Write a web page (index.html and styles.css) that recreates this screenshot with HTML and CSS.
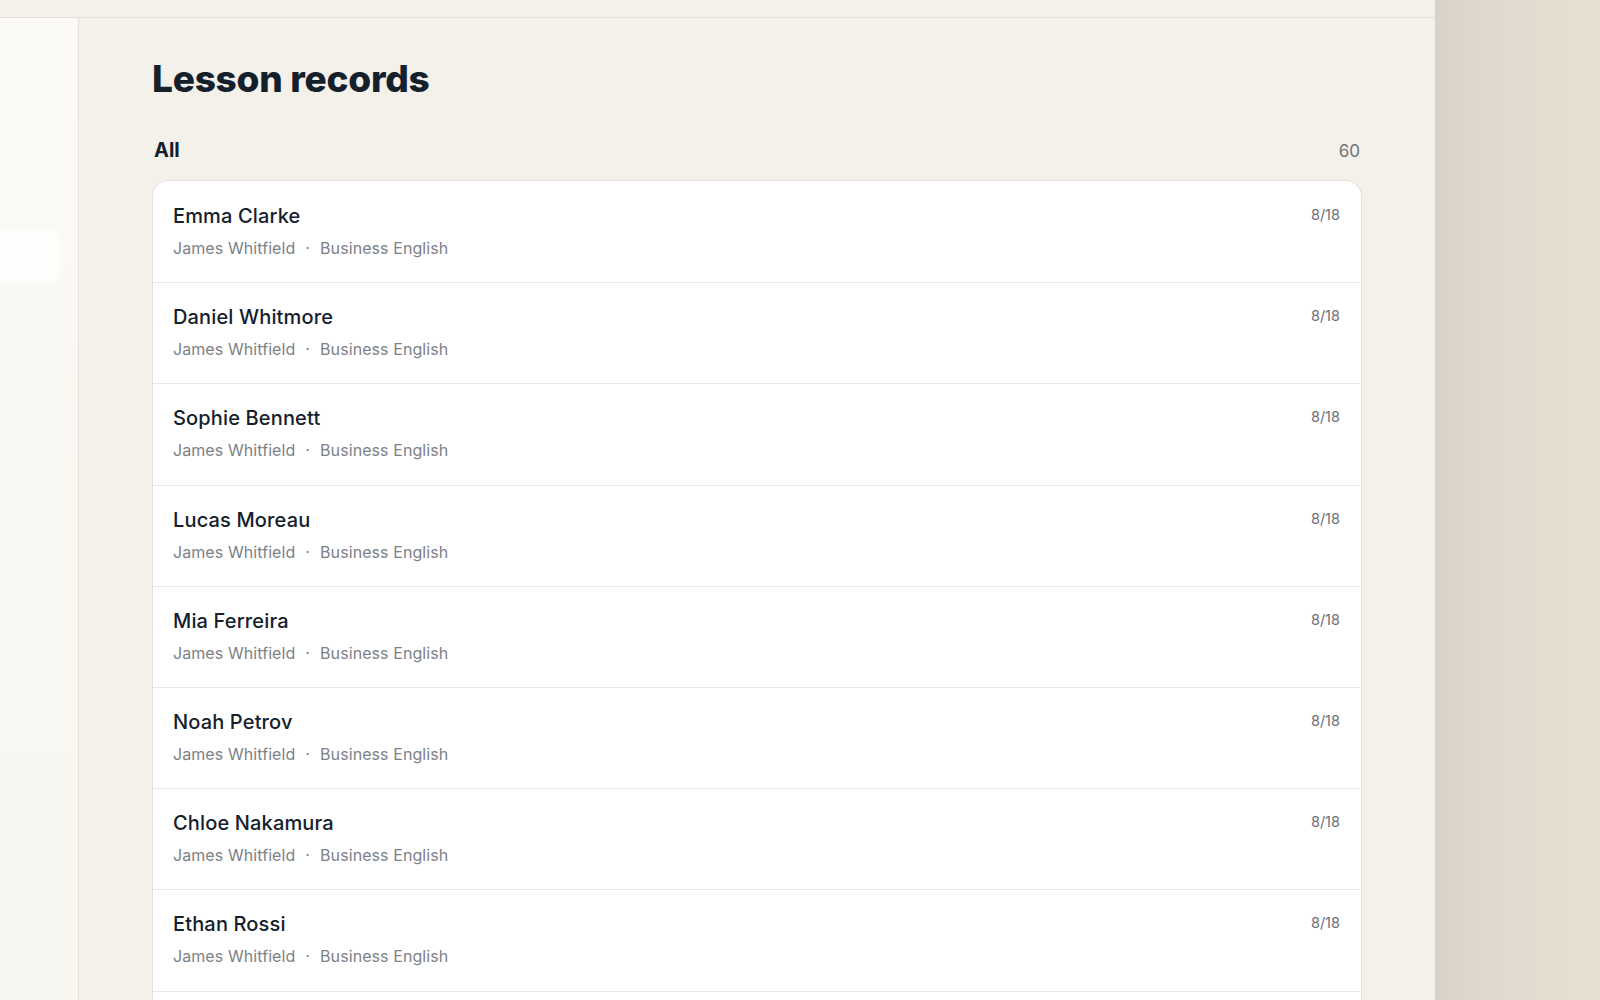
FILE: index.html
```html
<!DOCTYPE html>
<html lang="en">
<head>
    <meta charset="UTF-8">
    <meta name="viewport" content="width=device-width, initial-scale=1.0">
    <title>Lesson records</title>
    <link rel="stylesheet" href="styles.css">
</head>
<body>
    <div class="app">
        <div class="frame">
            <!-- Top bar -->
            <div class="topbar"></div>

            <div class="workspace">
                <!-- Sidebar -->
                <aside class="sidebar">
                    <div class="side-item"></div>
                </aside>

                <!-- Main content -->
                <main class="main">
                    <h1 class="page-title">Lesson records</h1>

                    <div class="list-header">
                        <span class="list-label">All</span>
                        <span class="list-count">60</span>
                    </div>

                    <div class="records">
                        <div class="record">
                            <div class="record-info">
                                <div class="record-name">Emma Clarke</div>
                                <div class="record-meta">James Whitfield<span class="dot">·</span>Business English</div>
                            </div>
                            <div class="record-date">8/18</div>
                        </div>
                        <div class="record">
                            <div class="record-info">
                                <div class="record-name">Daniel Whitmore</div>
                                <div class="record-meta">James Whitfield<span class="dot">·</span>Business English</div>
                            </div>
                            <div class="record-date">8/18</div>
                        </div>
                        <div class="record">
                            <div class="record-info">
                                <div class="record-name">Sophie Bennett</div>
                                <div class="record-meta">James Whitfield<span class="dot">·</span>Business English</div>
                            </div>
                            <div class="record-date">8/18</div>
                        </div>
                        <div class="record">
                            <div class="record-info">
                                <div class="record-name">Lucas Moreau</div>
                                <div class="record-meta">James Whitfield<span class="dot">·</span>Business English</div>
                            </div>
                            <div class="record-date">8/18</div>
                        </div>
                        <div class="record">
                            <div class="record-info">
                                <div class="record-name">Mia Ferreira</div>
                                <div class="record-meta">James Whitfield<span class="dot">·</span>Business English</div>
                            </div>
                            <div class="record-date">8/18</div>
                        </div>
                        <div class="record">
                            <div class="record-info">
                                <div class="record-name">Noah Petrov</div>
                                <div class="record-meta">James Whitfield<span class="dot">·</span>Business English</div>
                            </div>
                            <div class="record-date">8/18</div>
                        </div>
                        <div class="record">
                            <div class="record-info">
                                <div class="record-name">Chloe Nakamura</div>
                                <div class="record-meta">James Whitfield<span class="dot">·</span>Business English</div>
                            </div>
                            <div class="record-date">8/18</div>
                        </div>
                        <div class="record">
                            <div class="record-info">
                                <div class="record-name">Ethan Rossi</div>
                                <div class="record-meta">James Whitfield<span class="dot">·</span>Business English</div>
                            </div>
                            <div class="record-date">8/18</div>
                        </div>
                        <!-- next row starts just above the fold -->
                        <div class="record record-empty"></div>
                    </div>
                </main>
            </div>
        </div>

        <!-- Backdrop on the right -->
        <div class="backdrop"></div>
    </div>
</body>
</html>
```

FILE: styles.css
```css
html, body {
    margin: 0;
    padding: 0;
    height: 100%;
}

body {
    font-family: Inter, "Noto Sans", "Liberation Sans", sans-serif;
    background: #f3f1ea;
    color: #15202d;
    overflow: hidden;
}

.app {
    display: flex;
    height: 100vh;
}

/* App window */
.frame {
    width: 1435px;
    display: flex;
    flex-direction: column;
    background: #f3f1ea;
}

.topbar {
    height: 17px;
    flex-shrink: 0;
    background: #f3f1ea;
    border-bottom: 1px solid #e4e1d9;
}

.workspace {
    flex: 1;
    display: flex;
    min-height: 0;
}

/* Sidebar */
.sidebar {
    width: 78px;
    flex-shrink: 0;
    background: linear-gradient(180deg, #fbfaf6, #f8f6f0);
    border-right: 1px solid #e6e3db;
    padding-top: 210px;
}

.side-item {
    width: 61px;
    height: 56px;
    background: #fefdfb;
    border-radius: 0 12px 12px 0;
    box-shadow: 0 0 3px rgba(0, 0, 0, 0.02);
}

/* Main area */
.main {
    flex: 1;
    padding: 39px 73px 0 73px;
    overflow: hidden;
}

.page-title {
    margin: 0;
    font-size: 37px;
    line-height: 44px;
    font-weight: 800;
    letter-spacing: -0.25px;
    color: #15202d;
}

.list-header {
    display: flex;
    justify-content: space-between;
    align-items: baseline;
    margin-top: 35px;
    padding: 0 2px;
}

.list-label {
    font-size: 20px;
    line-height: 28px;
    font-weight: 700;
    color: #15202d;
}

.list-count {
    font-size: 17px;
    line-height: 24px;
    color: #6f737a;
}

/* Records card */
.records {
    margin-top: 16px;
    background: #fff;
    border: 1px solid #e4e1d9;
    border-radius: 16px 16px 0 0;
    border-bottom: none;
}

.record {
    display: flex;
    justify-content: space-between;
    align-items: flex-start;
    padding: 20px 21px 22.2px 20px;
    border-bottom: 1px solid #ebe9e3;
}

.record:first-child {
    padding-top: 21px;
}

.record-empty {
    height: 58px;
}

.record-name {
    font-size: 20px;
    line-height: 28px;
    font-weight: 500;
    color: #15202d;
    letter-spacing: 0.15px;
}

.record-meta {
    margin-top: 6px;
    font-size: 16px;
    line-height: 24px;
    color: #7d8188;
    letter-spacing: 0.08px;
}

.dot {
    margin: 0 10px;
}

.record-date {
    margin-top: 3px;
    font-size: 14.5px;
    line-height: 20px;
    color: #6b7078;
}

/* Right side backdrop */
.backdrop {
    flex: 1;
    background: linear-gradient(90deg, #d8d3c6 0%, #dfdacd 30%, #e7e1d4 100%);
}
```
